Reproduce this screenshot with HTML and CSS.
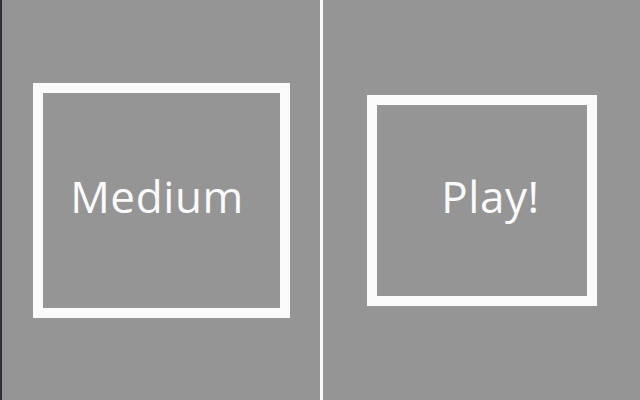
FILE: index.html
```html
<!DOCTYPE html>
<html>
<head>
<meta charset="utf-8">
<link rel="stylesheet" href="styles.css">
</head>
<body>
<div class="screen">
  <div class="edge"></div>
  <div class="panel panel-left">
    <div class="box box-medium"><span class="label label-medium">Medium</span></div>
  </div>
  <div class="divider"></div>
  <div class="panel panel-right">
    <div class="box box-play"><span class="label label-play">Play!</span></div>
  </div>
</div>
</body>
</html>
```
FILE: styles.css
```css
html, body {
  margin: 0;
  padding: 0;
  background: #959595;
}
.screen {
  width: 640px;
  height: 400px;
  display: flex;
  background: #959595;
  overflow: hidden;
}
.edge {
  width: 2px;
  background: #2b3036;
}
.panel {
  display: flex;
  align-items: center;
  justify-content: center;
}
.panel-left {
  width: 318px;
}
.divider {
  width: 3px;
  background: #fafafa;
}
.panel-right {
  width: 317px;
}
.box {
  box-sizing: border-box;
  border: 10px solid #fafafa;
  display: flex;
  align-items: center;
  justify-content: center;
}
.box-medium {
  width: 257px;
  height: 235px;
  margin-top: 1px;
  margin-left: 1px;
}
.box-play {
  width: 230px;
  height: 211px;
  margin-top: 1px;
}
.label {
  font-family: "Open Sans", "DejaVu Sans", sans-serif;
  font-size: 44px;
  color: #fafafa;
  line-height: 1;
  letter-spacing: 0.6px;
  padding-bottom: 10px;
}
.label-medium {
  padding-right: 9px;
}
.label-play {
  padding-left: 18px;
}
```
